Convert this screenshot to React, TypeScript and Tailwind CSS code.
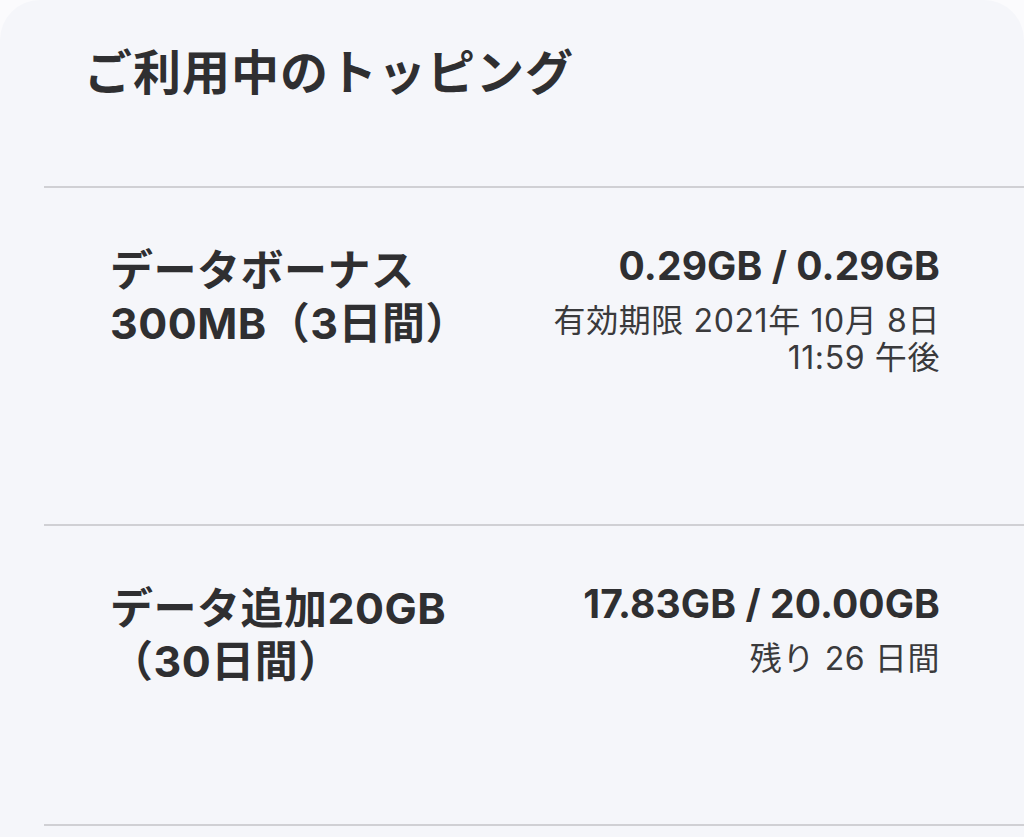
const rows = [
  {
    name: ['データボーナス', '300MB（3日間）'],
    usage: '0.29GB / 0.29GB',
    notes: ['有効期限 2021年 10月 8日', '11:59 午後'],
    pad: 'pb-[148px]',
  },
  {
    name: ['データ追加20GB', '（30日間）'],
    usage: '17.83GB / 20.00GB',
    notes: ['残り 26 日間'],
    pad: 'pb-[136px]',
  },
];

const App = () => {
  return (
    <div className="min-h-screen bg-[#fbfbfd] font-['Inter','Noto_Sans_CJK_JP',sans-serif] text-[#2f2f31]">
      <div className="min-h-[837px] rounded-t-[40px] bg-[#f5f6fa]">
        {/* Header */}
        <div className="h-[186px] pl-[84px] pt-[45px]">
          <h1 className="text-[48px] leading-[56px] font-bold tracking-[1px]">ご利用中のトッピング</h1>
        </div>

        {/* Topping list */}
        <div className="ml-[44px] border-t-2 border-[#d0d0d4]">
          {rows.map((row, i) => (
            <div
              key={i}
              className={`flex items-start justify-between border-b-2 border-[#d0d0d4] pt-[54px] pl-[66px] pr-[84px] ${row.pad}`}
            >
              <div className="mt-[2px] text-[43px] leading-[53px] font-bold tracking-[0.5px]">
                {row.name.map((line, j) => (
                  <div key={j}>{line}</div>
                ))}
              </div>
              <div className="text-right">
                <div className="text-[39px] leading-[48px] font-bold tracking-[0.1px]">{row.usage}</div>
                <div className="mt-3 text-[32px] leading-[37px] tracking-[0.6px] text-[#3a3a3c]">
                  {row.notes.map((line, j) => (
                    <div key={j}>{line}</div>
                  ))}
                </div>
              </div>
            </div>
          ))}
        </div>
      </div>
    </div>
  );
};

export default App;
